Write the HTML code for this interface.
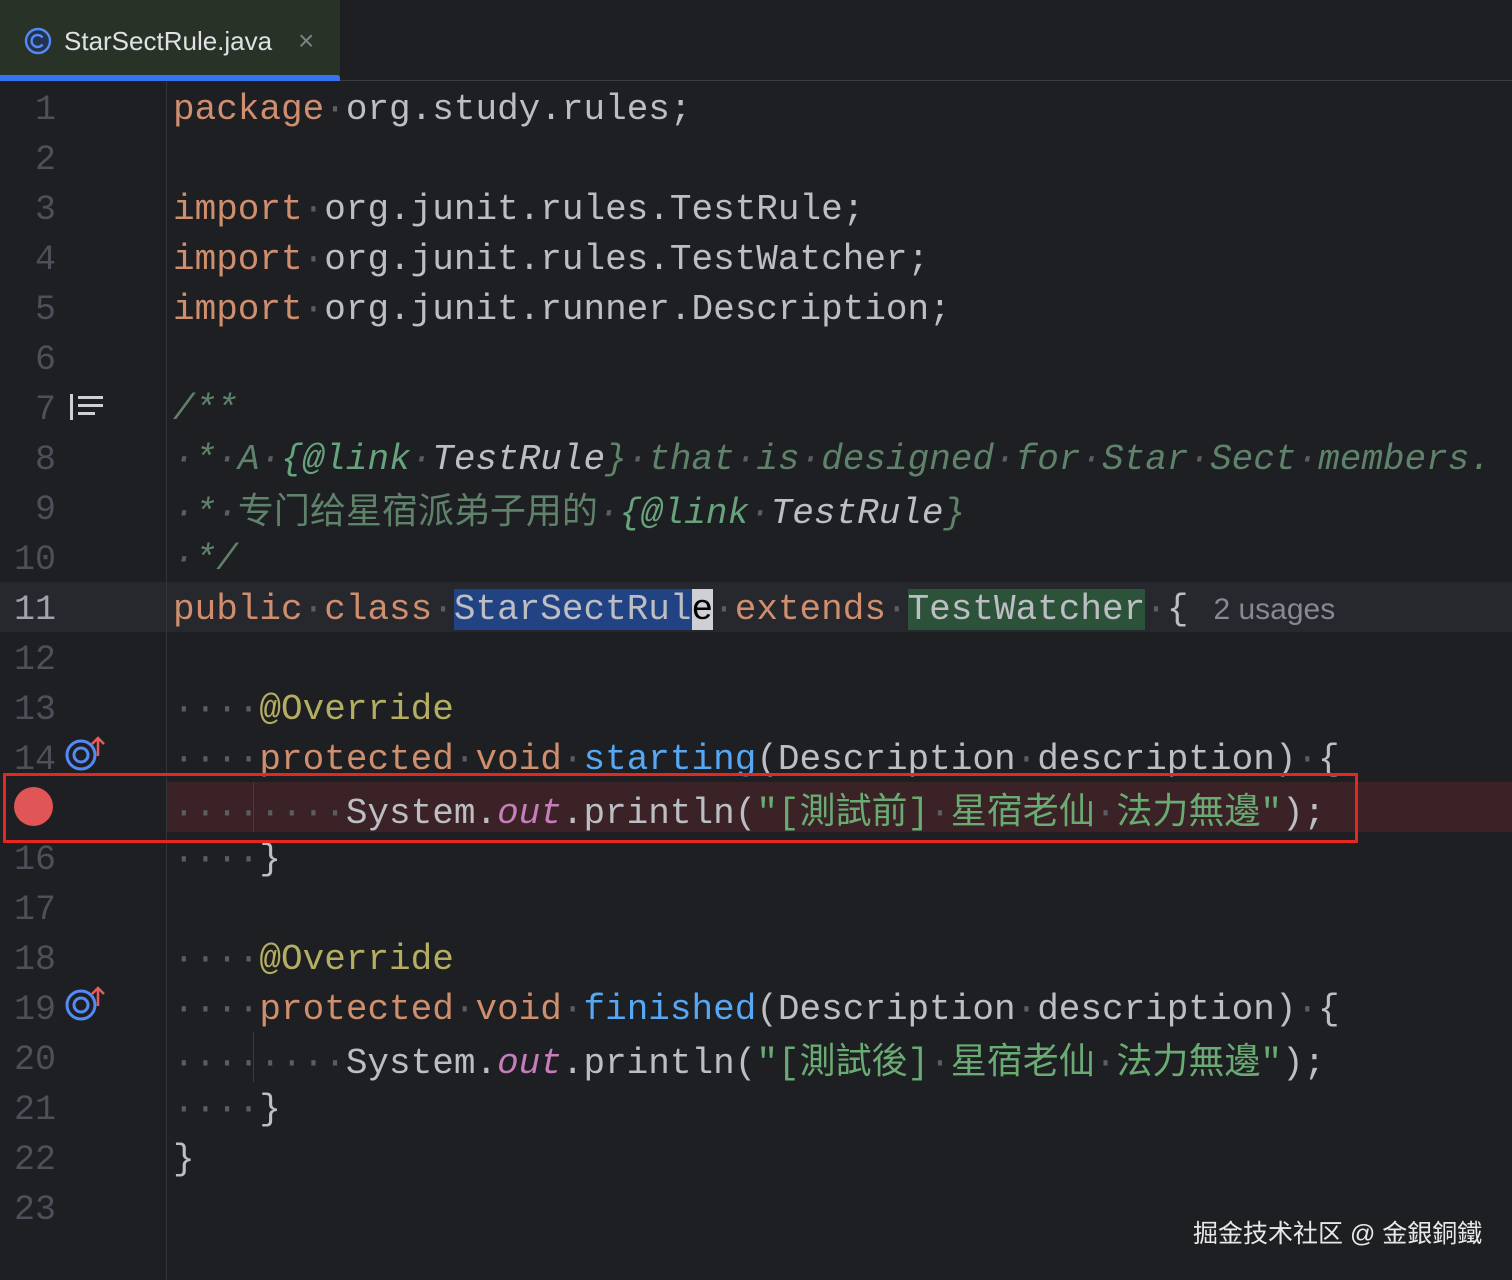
<!DOCTYPE html>
<html><head><meta charset="utf-8"><style>
*{margin:0;padding:0;box-sizing:border-box}
body{width:1512px;height:1280px;background:#1e1f22;position:relative;overflow:hidden;font-family:"Liberation Mono","Noto Sans CJK SC",monospace}
.tabbar{position:absolute;left:0;top:0;width:1512px;height:81px;border-bottom:1px solid #393b40}
.tab{position:absolute;left:0;top:0;width:340px;height:81px;background:#283227}
.tab .ul{position:absolute;left:0;bottom:0;width:340px;height:6px;background:#3574f0;border-radius:0 3px 0 0}
.tab .name{position:absolute;left:64px;top:26px;font:26px "Liberation Sans",sans-serif;color:#dfe1e5}
.tab .x{position:absolute;left:298px;top:25px;font:28px "Liberation Sans",sans-serif;color:#7e8187}
.sep{position:absolute;left:166px;top:82px;width:1px;height:1198px;background:#313438}
.ln{position:absolute;left:0;width:56px;text-align:right;font-size:35px;color:#4b5059;height:50px;line-height:50px;margin-top:3px}
.line{position:absolute;left:173px;height:50px;line-height:50px;font-size:36px;color:#bcbec4;white-space:pre;margin-top:3px}
.hl{position:absolute;left:0;width:1512px;height:50px}
.d{color:#5a5d63}
.k{color:#cf8e6d}
.c{color:#5f826b;font-style:italic}
.t{color:#67a37c;font-style:italic}
.tr{color:#bcbec4;font-style:italic}
.a{color:#b3ae60}
.m{color:#56a8f5}
.o{color:#c77dbb;font-style:italic}
.s{color:#6aab73}
.cj{font-family:"Noto Sans CJK SC",sans-serif;font-style:normal}
</style></head><body>
<div class="tabbar"></div>
<div class="tab">
<svg style="position:absolute;left:24px;top:27px" width="28" height="28" viewBox="0 0 28 28"><circle cx="14" cy="14" r="12" fill="#25324d" stroke="#548af7" stroke-width="2.4"/><path d="M18.5 10.5a6 6 0 1 0 0 7" fill="none" stroke="#548af7" stroke-width="2.4"/></svg>
<div class="name">StarSectRule.java</div><div class="x">×</div>
<div class="ul"></div></div>

<div class="hl" style="top:582px;background:#26282e"></div>
<div class="hl" style="top:782px;left:167px;width:1345px;background:#3a2226"></div>
<div class="sep"></div>

<div class="ln" style="top:82px">1</div>
<div class="ln" style="top:132px">2</div>
<div class="ln" style="top:182px">3</div>
<div class="ln" style="top:232px">4</div>
<div class="ln" style="top:282px">5</div>
<div class="ln" style="top:332px">6</div>
<div class="ln" style="top:382px">7</div>
<div class="ln" style="top:432px">8</div>
<div class="ln" style="top:482px">9</div>
<div class="ln" style="top:532px">10</div>
<div class="ln" style="top:582px;color:#a1a3ab">11</div>
<div class="ln" style="top:632px">12</div>
<div class="ln" style="top:682px">13</div>
<div class="ln" style="top:732px">14</div>
<div class="ln" style="top:832px">16</div>
<div class="ln" style="top:882px">17</div>
<div class="ln" style="top:932px">18</div>
<div class="ln" style="top:982px">19</div>
<div class="ln" style="top:1032px">20</div>
<div class="ln" style="top:1082px">21</div>
<div class="ln" style="top:1132px">22</div>
<div class="ln" style="top:1182px">23</div>

<svg style="position:absolute;left:68px;top:392px" width="40" height="30"><rect x="2" y="2" width="3" height="26" fill="#ced0d6"/><rect x="10" y="4" width="25" height="3" fill="#ced0d6"/><rect x="10" y="12" width="25" height="3" fill="#ced0d6"/><rect x="10" y="20" width="17" height="3" fill="#ced0d6"/></svg>
<svg style="position:absolute;left:64px;top:734px" width="44" height="40"><circle cx="17" cy="21" r="14" fill="none" stroke="#548af7" stroke-width="3"/><circle cx="17" cy="21" r="7" fill="none" stroke="#548af7" stroke-width="3"/><path d="M34 22V4M28 10l6-6 6 6" fill="none" stroke="#e55c5c" stroke-width="2.5"/></svg>
<svg style="position:absolute;left:64px;top:984px" width="44" height="40"><circle cx="17" cy="21" r="14" fill="none" stroke="#548af7" stroke-width="3"/><circle cx="17" cy="21" r="7" fill="none" stroke="#548af7" stroke-width="3"/><path d="M34 22V4M28 10l6-6 6 6" fill="none" stroke="#e55c5c" stroke-width="2.5"/></svg>
<div style="position:absolute;left:14px;top:787px;width:39px;height:39px;border-radius:50%;background:#e05555"></div>
<div style="position:absolute;left:253px;top:782px;width:1px;height:50px;background:#4a3a3e"></div>
<div style="position:absolute;left:253px;top:1032px;width:1px;height:50px;background:#393b40"></div>

<div class="line" style="top:82px"><span class="k">package</span><span class="d">·</span>org.study.rules;</div>
<div class="line" style="top:182px"><span class="k">import</span><span class="d">·</span>org.junit.rules.TestRule;</div>
<div class="line" style="top:232px"><span class="k">import</span><span class="d">·</span>org.junit.rules.TestWatcher;</div>
<div class="line" style="top:282px"><span class="k">import</span><span class="d">·</span>org.junit.runner.Description;</div>
<div class="line c" style="top:382px">/**</div>
<div class="line c" style="top:432px"><span class="d">·</span>*<span class="d">·</span>A<span class="d">·</span><span class="t">{@link</span><span class="d">·</span><span class="tr">TestRule</span>}<span class="d">·</span>that<span class="d">·</span>is<span class="d">·</span>designed<span class="d">·</span>for<span class="d">·</span>Star<span class="d">·</span>Sect<span class="d">·</span>members.</div>
<div class="line c" style="top:480px"><span class="d">·</span>*<span class="d">·</span><span class="cj">专门给星宿派弟子用的</span><span class="d">·</span><span class="t">{@link</span><span class="d">·</span><span class="tr">TestRule</span>}</div>
<div class="line c" style="top:532px"><span class="d">·</span>*/</div>
<div class="line" style="top:582px"><span class="k">public</span><span class="d">·</span><span class="k">class</span><span class="d">·</span><span style="background:#214283">StarSectRul</span><span style="background:#ced0d6;color:#000">e</span><span class="d">·</span><span class="k">extends</span><span class="d">·</span><span style="background:#2c5239">TestWatcher</span><span class="d">·</span>{<span style="font:30px 'Liberation Sans',sans-serif;color:#868a91">   2 usages</span></div>
<div class="line" style="top:682px"><span class="d">····</span><span class="a">@Override</span></div>
<div class="line" style="top:732px"><span class="d">····</span><span class="k">protected</span><span class="d">·</span><span class="k">void</span><span class="d">·</span><span class="m">starting</span>(Description<span class="d">·</span>description)<span class="d">·</span>{</div>
<div class="line" style="top:780px"><span class="d">········</span>System.<span class="o">out</span>.println(<span class="s">"[<span class="cj">測試前</span>]<span class="d">·</span><span class="cj">星宿老仙</span><span class="d">·</span><span class="cj">法力無邊</span>"</span>);</div>
<div class="line" style="top:832px"><span class="d">····</span>}</div>
<div class="line" style="top:932px"><span class="d">····</span><span class="a">@Override</span></div>
<div class="line" style="top:982px"><span class="d">····</span><span class="k">protected</span><span class="d">·</span><span class="k">void</span><span class="d">·</span><span class="m">finished</span>(Description<span class="d">·</span>description)<span class="d">·</span>{</div>
<div class="line" style="top:1030px"><span class="d">········</span>System.<span class="o">out</span>.println(<span class="s">"[<span class="cj">測試後</span>]<span class="d">·</span><span class="cj">星宿老仙</span><span class="d">·</span><span class="cj">法力無邊</span>"</span>);</div>
<div class="line" style="top:1082px"><span class="d">····</span>}</div>
<div class="line" style="top:1132px">}</div>

<div style="position:absolute;left:3px;top:773px;width:1355px;height:70px;border:3px solid #e5271f"></div>
<div style="position:absolute;left:1193px;top:1214px;font:25px 'Liberation Sans','Noto Sans CJK SC',sans-serif;color:#e8e8e8">掘金技术社区 @ 金銀銅鐵</div>
</body></html>
